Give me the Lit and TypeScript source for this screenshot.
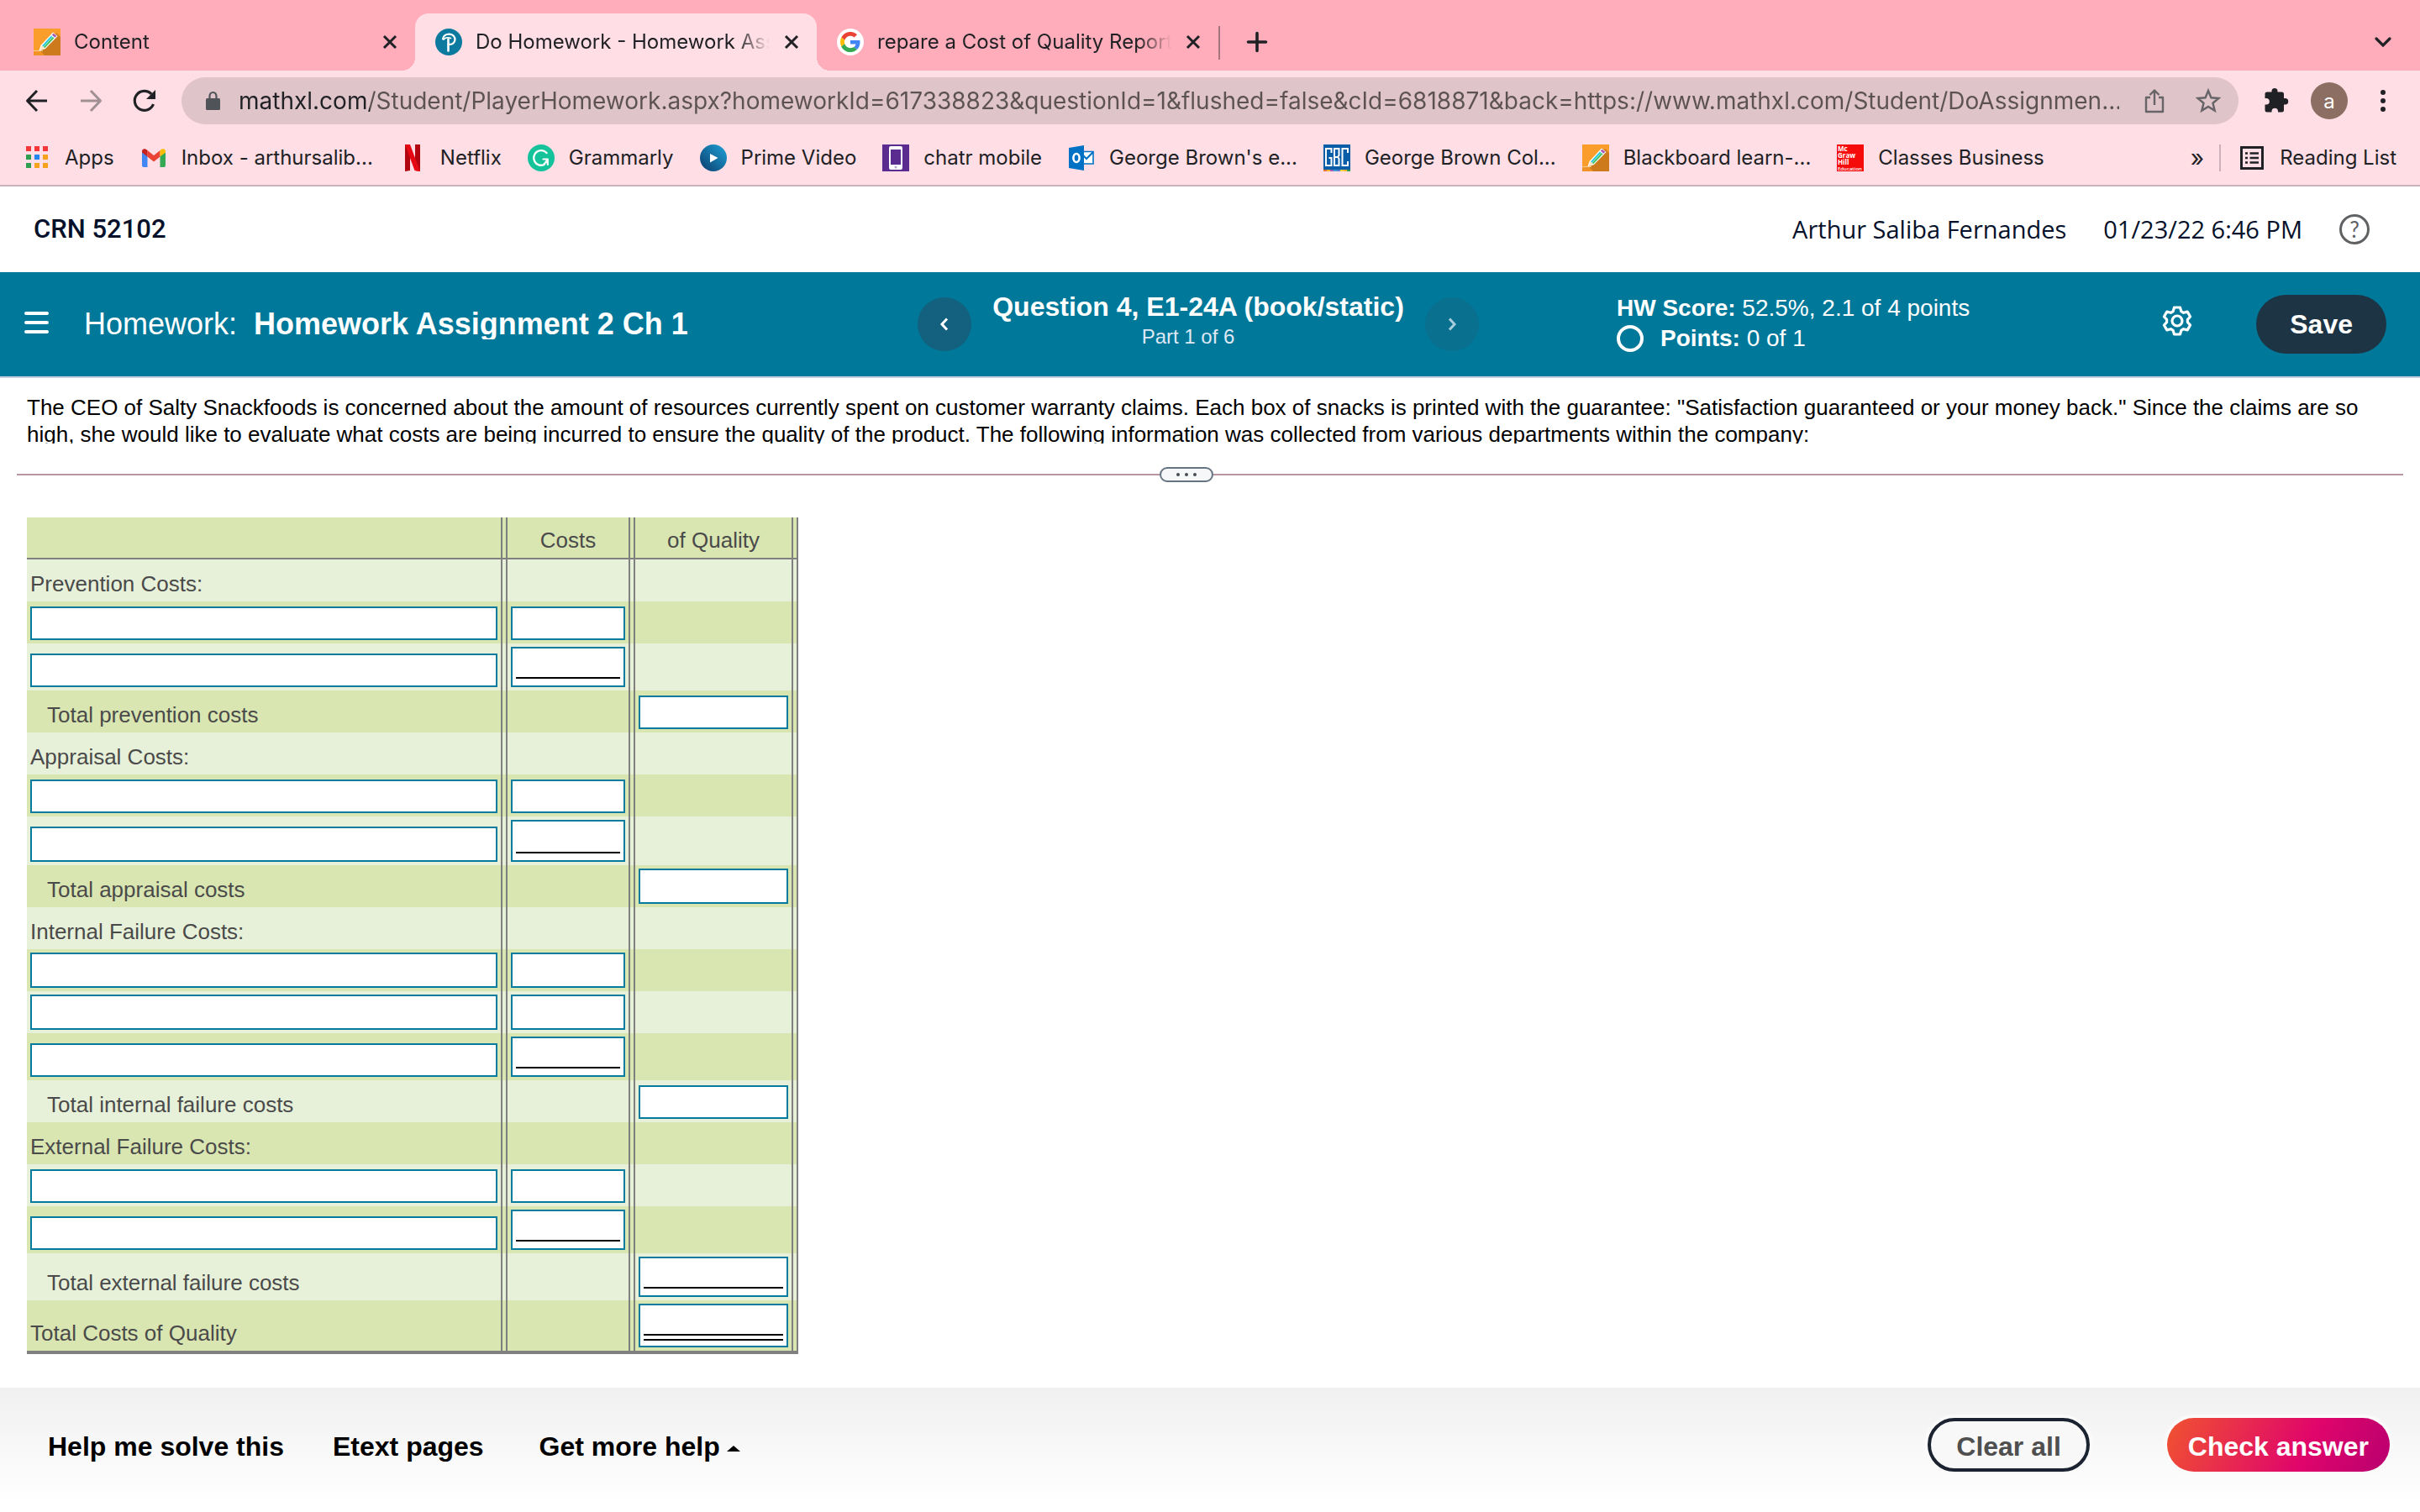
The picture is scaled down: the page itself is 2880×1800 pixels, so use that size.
import { LitElement, html, css, svg, nothing } from "lit";
import { customElement } from "lit/decorators.js";
import { classMap } from "lit/directives/class-map.js";

/* ---------- icons ---------- */

const pencilIcon = html`<svg class="fav" viewBox="0 0 32 32" aria-hidden="true">
  <rect width="32" height="32" fill="#fb9d2b" />
  <path d="M27 5 L32 10 V32 H13 L7 26 Z" fill="#cc7a1c" />
  <path d="M0 26.500 H7 L13 32 H0 Z" fill="#f09225" />
  <path d="M0 26.500 H11" stroke="#f9c787" stroke-width="1.200" />
  <path d="M6.500 26.500 L8.500 20 L23 4.500 L28.500 9 L14 24 Z" fill="#fff" />
  <path d="M10 20.500 L21 8.500 L22.500 9.700 L11.500 21.700 Z" fill="#22c7de" />
  <path d="M11.800 22 L22.800 10 L24.500 11.300 L13.300 23.300 Z" fill="#3fc35f" />
  <path d="M9 21 L10.500 20.500 L12.500 23.500 L8 25.500 Z" fill="#ffe3bd" />
  <path d="M21.800 7.600 L23.600 5.700 L27.300 8.800 L25.400 10.700 Z" fill="#a557b8" />
</svg>`;

const pearsonIcon = html`<svg class="fav" viewBox="0 0 32 32" aria-hidden="true">
  <circle cx="16" cy="16" r="16" fill="#0b7a9e" />
  <path d="M9 12.500 C9.500 8.500 13 6.500 17 6.700 C21 7 23.700 9.800 23.400 13.600 C23.100 17 20 19.200 17 18.800" fill="none" stroke="#fff" stroke-width="2.200" stroke-linecap="round" />
  <path d="M15.500 12.500 V26.500" stroke="#fff" stroke-width="2.600" stroke-linecap="round" />
  <path d="M10 12.800 C12 10.500 16 10.500 18.500 11.500" fill="none" stroke="#fff" stroke-width="1.800" stroke-linecap="round" />
</svg>`;

const googleIcon = html`<svg class="fav" viewBox="0 0 32 32" aria-hidden="true">
  <circle cx="16" cy="16" r="16" fill="#fff" />
  <g transform="translate(4 4) scale(.5)">
    <path fill="#EA4335" d="M24 9.500c3.540 0 6.710 1.220 9.210 3.600l6.850-6.850C35.900 2.380 30.470 0 24 0 14.620 0 6.510 5.380 2.560 13.220l7.980 6.190C12.430 13.720 17.740 9.500 24 9.500z" />
    <path fill="#4285F4" d="M46.980 24.550c0-1.570-.15-3.090-.38-4.550H24v9.020h12.940c-.58 2.960-2.260 5.480-4.780 7.180l7.730 6c4.510-4.180 7.090-10.360 7.090-17.650z" />
    <path fill="#FBBC05" d="M10.530 28.590c-.48-1.450-.76-2.990-.76-4.590s.27-3.140.76-4.590l-7.980-6.190C.92 16.460 0 20.120 0 24c0 3.880.92 7.540 2.560 10.780l7.970-6.190z" />
    <path fill="#34A853" d="M24 48c6.480 0 11.930-2.130 15.890-5.810l-7.730-6c-2.150 1.450-4.920 2.300-8.160 2.300-6.260 0-11.570-4.220-13.470-9.910l-7.980 6.190C6.510 42.620 14.620 48 24 48z" />
  </g>
</svg>`;

const appsIcon = html`<svg class="fav" viewBox="0 0 32 32" aria-hidden="true">
  ${["#f4373a", "#f4373a", "#f4373a", "#2e9e4f", "#2485ee", "#f5a31d", "#2e9e4f", "#f5a31d", "#f5a31d"].map(
    (c, i) => svg`<rect x=${3 + (i % 3) * 10} y=${2 + Math.floor(i / 3) * 10} width="6" height="6" fill=${c} />`,
  )}
</svg>`;

const gmailIcon = html`<svg class="fav" viewBox="0 0 32 32" aria-hidden="true">
  <path d="M2 9 L8.500 13.500 V27 H4 Q2 27 2 25 Z" fill="#4285f4" />
  <path d="M30 9 L23.500 13.500 V27 H28 Q30 27 30 25 Z" fill="#34a853" />
  <path d="M8.500 7 L16 13 L23.500 7 V14.500 L16 20.500 L8.500 14.500 Z" fill="#ea4335" />
  <path d="M2 8.500 C2 5 5.500 4.200 8.500 7 V14.500 L2 9.500 Z" fill="#c5221f" />
  <path d="M30 8.500 C30 5 26.500 4.200 23.500 7 V14.500 L30 9.500 Z" fill="#fbbc04" />
</svg>`;

const netflixIcon = html`<svg class="fav" viewBox="0 0 32 32" aria-hidden="true">
  <path d="M7 0 H13 V31 L7 32 Z" fill="#b1060f" />
  <path d="M19 0 H25 V32 L19 31 Z" fill="#b1060f" />
  <path d="M7 0 H13 L25 32 L18.500 31 Z" fill="#e50914" />
</svg>`;

const grammarlyIcon = html`<svg class="fav" viewBox="0 0 32 32" aria-hidden="true">
  <circle cx="16" cy="16" r="16" fill="#15c39a" />
  <path d="M22.500 10 A8.800 8.800 0 1 0 19.500 24" fill="none" stroke="#fff" stroke-width="2.400" stroke-linecap="round" />
  <path d="M18.500 17.500 H23.800 V24 M23.800 18 L19.500 23.500" fill="none" stroke="#fff" stroke-width="2.200" stroke-linecap="round" stroke-linejoin="round" />
</svg>`;

const primeIcon = html`<svg class="fav" viewBox="0 0 32 32" aria-hidden="true">
  <defs>
    <linearGradient id="prime" x1="1" y1="0" x2="0" y2="1">
      <stop offset="0" stop-color="#1ea3d8" />
      <stop offset="1" stop-color="#0b3b6b" />
    </linearGradient>
  </defs>
  <circle cx="16" cy="16" r="16" fill="url(#prime)" />
  <path d="M12 11 L21.500 16 L12 21.500 Z" fill="#fff" />
</svg>`;

const chatrIcon = html`<svg class="fav" viewBox="0 0 32 32" aria-hidden="true">
  <rect width="32" height="32" fill="#5b2c8f" />
  <rect x="8" y="2" width="16" height="28" rx="2" fill="#fff" />
  <rect x="10" y="6" width="12" height="18" fill="#5b2c8f" />
  <circle cx="16" cy="27" r="1.500" fill="#b9a5cf" />
</svg>`;

const outlookIcon = html`<svg class="fav" viewBox="0 0 32 32" aria-hidden="true">
  <path d="M17 8.500 H30 V23 H17 Z" fill="#fff" stroke="#0072c6" stroke-width="1.600" />
  <path d="M17 12 L22 17 L30 9" fill="none" stroke="#0072c6" stroke-width="2.200" />
  <path d="M1 4 L19 1 V31 L1 28 Z" fill="#0072c6" />
  <ellipse cx="10" cy="16" rx="3.600" ry="5" fill="none" stroke="#fff" stroke-width="2.600" />
</svg>`;

const gbcIcon = html`<svg class="fav" viewBox="0 0 32 32" aria-hidden="true">
  <rect width="32" height="30" fill="#0a5ea8" />
  <g fill="none" stroke="#fff" stroke-width="2">
    <path d="M9.500 10 V5 H3 V25 H9.500 V16 H6.500" />
    <path d="M13 5 H18.500 V13 L17 15 L18.500 17 V25 H13 Z M13 15 H17" />
    <path d="M29 10 V5 H22.500 V25 H29 V20" />
  </g>
  ${["#e8743b", "#f2b632", "#9c5fb5", "#3aa0dd", "#5d7fd0", "#f2d13a", "#f2b632", "#2e9e4f"].map(
    (c, i) => svg`<rect x=${i * 4} y="30" width="4" height="2" fill=${c} />`,
  )}
</svg>`;

const mcgrawIcon = html`<svg class="fav" viewBox="0 0 32 32" aria-hidden="true">
  <rect width="32" height="32" fill="#f60b0b" />
  <g fill="#fff" font-family="Open Sans, sans-serif" font-weight="700" font-size="8">
    <text x="1" y="8">Mc</text>
    <text x="1" y="16">Graw</text>
    <text x="1" y="24">Hill</text>
    <text x="1" y="31" font-size="6" font-weight="600">Education</text>
  </g>
</svg>`;

const closeIcon = html`<svg class="close-glyph" viewBox="0 0 20 20" aria-hidden="true">
  <path d="M3 3 L17 17 M17 3 L3 17" stroke="#202124" stroke-width="3" />
</svg>`;

/* ---------- browser frame ---------- */

const tabs = [
  { title: "Content", icon: pencilIcon, active: false },
  { title: "Do Homework - Homework Assignment", icon: pearsonIcon, active: true },
  { title: "repare a Cost of Quality Report for", icon: googleIcon, active: false },
];

const bookmarks = [
  { label: "Apps", icon: appsIcon },
  { label: "Inbox - arthursalib...", icon: gmailIcon },
  { label: "Netflix", icon: netflixIcon },
  { label: "Grammarly", icon: grammarlyIcon },
  { label: "Prime Video", icon: primeIcon },
  { label: "chatr mobile", icon: chatrIcon },
  { label: "George Brown's e...", icon: outlookIcon },
  { label: "George Brown Col...", icon: gbcIcon },
  { label: "Blackboard learn-...", icon: pencilIcon },
  { label: "Classes Business", icon: mcgrawIcon },
];

const address =
  "mathxl.com/Student/PlayerHomework.aspx?homeworkId=617338823&questionId=1&flushed=false&cId=6818871&back=https://www.mathxl.com/Student/DoAssignmen...";

@customElement("browser-frame")
export class BrowserFrame extends LitElement {
  static styles = css`
    :host {
      display: block;
      font-family: Inter, "Liberation Sans", sans-serif;
      font-size: 24px;
      color: #202124;
      background: #ffdee5;
      border-bottom: 2px solid #cbb1ba;
    }
    button {
      font: inherit;
      color: inherit;
      background: none;
      border: 0;
      padding: 0;
      display: grid;
      place-items: center;
    }
    .strip {
      display: flex;
      height: 84px;
      padding-left: 16px;
      padding-right: 22px;
      background: #ffadbb;
      align-items: flex-end;
    }
    .tab {
      position: relative;
      box-sizing: border-box;
      width: 478px;
      height: 68px;
      padding: 0 20px 0 24px;
      display: flex;
      align-items: center;
      gap: 16px;
    }
    .tab.active {
      background: #ffdee5;
      border-radius: 16px 16px 0 0;
    }
    .tab.active::before,
    .tab.active::after {
      content: "";
      position: absolute;
      bottom: 0;
      width: 16px;
      height: 16px;
    }
    .tab.active::before {
      right: 100%;
      background: radial-gradient(circle at 0 0, transparent 16px, #ffdee5 16px);
    }
    .tab.active::after {
      left: 100%;
      background: radial-gradient(circle at 100% 0, transparent 16px, #ffdee5 16px);
    }
    .title {
      flex: 1;
      min-width: 0;
      overflow: hidden;
      white-space: nowrap;
      line-height: 32px;
      mask-image: linear-gradient(90deg, #000 calc(100% - 40px), transparent);
    }
    .close {
      width: 20px;
      height: 20px;
    }
    .close-glyph {
      width: 20px;
      height: 20px;
    }
    .rule {
      width: 2px;
      height: 40px;
      margin-bottom: 13px;
      background: #a8757f;
    }
    .strip .tool {
      height: 68px;
    }
    .strip .tool.new {
      margin-left: 22px;
    }
    .push {
      margin-left: auto;
    }
    .fav {
      width: 32px;
      height: 32px;
      flex: none;
      display: block;
    }
    .bar {
      display: flex;
      align-items: center;
      gap: 20px;
      padding: 8px 22px;
    }
    .tool {
      width: 44px;
      height: 44px;
      flex: none;
    }
    .tool svg {
      width: 32px;
      height: 32px;
    }
    .omnibox {
      flex: 1;
      min-width: 0;
      height: 56px;
      margin: 0 2px;
      box-sizing: border-box;
      padding: 0 14px 0 28px;
      border-radius: 28px;
      background: #dfc4ca;
      display: flex;
      align-items: center;
      gap: 20px;
    }
    .lock {
      width: 20px;
      height: 24px;
      flex: none;
    }
    .address {
      flex: 1;
      min-width: 0;
      border: 0;
      padding: 0;
      font: 28px/40px Inter, "Liberation Sans", sans-serif;
      color: #5c5254;
      background: linear-gradient(90deg, #202124 156px, #5c5254 156px);
      background-clip: text;
      -webkit-background-clip: text;
      -webkit-text-fill-color: transparent;
      outline: 0;
    }
    .avatar {
      border-radius: 50%;
      background: #8d6e63;
      color: #fff;
      font-size: 24px;
    }
    .marks {
      display: flex;
      align-items: center;
      gap: 31px;
      height: 64px;
      padding: 0 28px;
    }
    .mark {
      display: flex;
      align-items: center;
      gap: 17px;
      color: inherit;
      text-decoration: none;
      white-space: nowrap;
      line-height: 32px;
    }
    .more {
      margin-left: auto;
      font-size: 28px;
    }
    .tail {
      border-left: 2px solid #cbb1ba;
      padding-left: 21px;
      margin-left: -13px;
    }
  `;

  render() {
    return html`
      <div class="strip">
        ${tabs.map(
          (t) => html`<div class=${classMap({ tab: true, active: t.active })}>
            ${t.icon}<span class="title">${t.title}</span>
            <button class="close" aria-label="Close tab">${closeIcon}</button>
          </div>`,
        )}
        <span class="rule"></span>
        <button class="tool new" aria-label="New tab">
          <svg viewBox="0 0 32 32"><path d="M16 5.500 V26.500 M5.500 16 H26.500" stroke="#202124" stroke-width="3.600" stroke-linecap="round" /></svg>
        </button>
        <button class="tool push" aria-label="Search tabs">
          <svg viewBox="0 0 32 32"><path d="M8 12 L16 20 L24 12" fill="none" stroke="#202124" stroke-width="3.200" stroke-linecap="round" /></svg>
        </button>
      </div>

      <div class="bar">
        <button class="tool" aria-label="Back">
          <svg viewBox="0 0 32 32"><path d="M28 16 H5 M16 4 L4.500 16 L16 28" fill="none" stroke="#202124" stroke-width="3" stroke-linejoin="round" /></svg>
        </button>
        <button class="tool" aria-label="Forward">
          <svg viewBox="0 0 32 32"><path d="M4 16 H27 M16 4 L27.500 16 L16 28" fill="none" stroke="#a08f94" stroke-width="3" stroke-linejoin="round" /></svg>
        </button>
        <button class="tool" aria-label="Reload">
          <svg viewBox="0 0 32 32">
            <path d="M26.500 20 A11.500 11.500 0 1 1 24.200 8" fill="none" stroke="#202124" stroke-width="3.200" />
            <path d="M29 3 V14 H18 Z" fill="#202124" />
          </svg>
        </button>
        <div class="omnibox">
          <svg class="lock" viewBox="0 0 20 24">
            <path d="M5.500 10 V6.500 A4 4.500 0 0 1 13.500 6.500 V10" fill="none" stroke="#505357" stroke-width="2.200" />
            <rect x="1" y="9" width="17" height="14" rx="1.500" fill="#505357" />
          </svg>
          <input class="address" type="text" aria-label="Address" .value=${address} />
          <button class="tool" aria-label="Share">
            <svg viewBox="0 0 32 32"><path d="M11 12 H6 V29 H26 V12 H21 M16 21 V4 M10.500 9 L16 3.500 L21.500 9" fill="none" stroke="#666466" stroke-width="2.400" stroke-linejoin="round" /></svg>
          </button>
          <button class="tool" aria-label="Bookmark this page">
            <svg viewBox="0 0 32 32"><path d="M16 4 L19.400 12.300 L28.400 13 L21.500 18.800 L23.700 27.600 L16 22.900 L8.300 27.600 L10.500 18.800 L3.600 13 L12.600 12.300 Z" fill="none" stroke="#666466" stroke-width="2.400" /></svg>
          </button>
        </div>
        <button class="tool" aria-label="Extensions">
          <svg viewBox="0 0 32 32"><path d="M27.500 13 H26 V8 Q26 5.500 23.500 5.500 H18.500 V4.500 A3.500 3.500 0 0 0 11.500 4.500 V5.500 H6 Q3.500 5.500 3.500 8 V13 H5 A3.800 3.800 0 0 1 5 20.600 H3.500 V27 Q3.500 29.500 6 29.500 H11.500 V28 A3.800 3.800 0 0 1 19 28 V29.500 H23.500 Q26 29.500 26 27 V20.500 H27.500 A3.700 3.700 0 0 0 27.500 13 Z" fill="#202124" /></svg>
        </button>
        <button class="tool avatar" aria-label="Profile">a</button>
        <button class="tool" aria-label="Browser menu">
          <svg viewBox="0 0 32 32" fill="#202124"><circle cx="16" cy="6" r="3" /><circle cx="16" cy="16" r="3" /><circle cx="16" cy="26" r="3" /></svg>
        </button>
      </div>

      <nav class="marks" aria-label="Bookmarks">
        ${bookmarks.map((b) => html`<a class="mark" href="#">${b.icon}<span>${b.label}</span></a>`)}
        <button class="more" aria-label="More bookmarks">»</button>
        <a class="mark tail" href="#">
          <svg class="fav" viewBox="0 0 32 32">
            <rect x="3.500" y="3.500" width="25" height="25" fill="none" stroke="#202124" stroke-width="3" />
            <path d="M8 10.500 H11 M8 16 H11 M8 21.500 H11 M13.500 10.500 H24 M13.500 16 H24 M13.500 21.500 H24" stroke="#202124" stroke-width="2.600" />
          </svg>
          <span>Reading List</span>
        </a>
      </nav>
    `;
  }
}

/* ---------- cost table ---------- */

type Box = "plain" | "sum" | "total";
interface Row {
  label?: string;
  indent?: boolean;
  cost?: Box;
  quality?: Box;
  size?: "tall" | "taller" | "last";
  roomy?: boolean;
}

const rows: Row[] = [
  { label: "Prevention Costs:" },
  { cost: "plain" },
  { cost: "sum", size: "tall" },
  { label: "Total prevention costs", indent: true, quality: "plain" },
  { label: "Appraisal Costs:" },
  { cost: "plain" },
  { cost: "sum", size: "taller", roomy: true },
  { label: "Total appraisal costs", indent: true, quality: "plain", roomy: true },
  { label: "Internal Failure Costs:" },
  { cost: "plain", roomy: true },
  { cost: "plain", roomy: true },
  { cost: "sum", size: "tall" },
  { label: "Total internal failure costs", indent: true, quality: "plain" },
  { label: "External Failure Costs:" },
  { cost: "plain" },
  { cost: "sum", size: "tall" },
  { label: "Total external failure costs", indent: true, quality: "sum", size: "tall" },
  { label: "Total Costs of Quality", quality: "total", size: "last" },
];

@customElement("cost-table")
export class CostTable extends LitElement {
  static styles = css`
    :host {
      display: block;
      font: 26px/30px "Liberation Sans", Arial, sans-serif;
      color: #4a4a4a;
    }
    table {
      border-collapse: separate;
      border-spacing: 0;
      table-layout: fixed;
      width: 918px;
      border-bottom: 4px solid #808080;
    }
    .c-label {
      width: 572px;
    }
    .c-cost {
      width: 152px;
    }
    .c-quality {
      width: 194px;
    }
    th,
    td {
      box-sizing: border-box;
      height: 50px;
      padding: 0 12px 4px 4px;
      vertical-align: bottom;
      text-align: left;
      font-weight: 400;
      background: linear-gradient(90deg, #808080 2px, transparent 2px 6px, #808080 6px) right / 8px 100% no-repeat;
    }
    th {
      text-align: center;
      border-bottom: 2px solid #808080;
      padding-bottom: 6px;
    }
    tr {
      background: #e7f1d9;
    }
    tbody tr:nth-child(even),
    thead tr {
      background: #d9e6b1;
    }
    .tall td {
      height: 56px;
    }
    .taller td {
      height: 58px;
    }
    .last td {
      height: 60px;
    }
    .text {
      display: block;
      padding-bottom: 2px;
    }
    .indent {
      padding-left: 20px;
    }
    .box {
      display: block;
      box-sizing: border-box;
      border: 2px solid #047a9c;
      background: #fff;
    }
    input {
      display: block;
      box-sizing: border-box;
      width: 100%;
      height: 36px;
      border: 0;
      padding: 0 4px;
      font: inherit;
      color: inherit;
      background: none;
      outline: 0;
    }
    .roomy input {
      height: 38px;
    }
    .sum,
    .total {
      padding: 0 4px 8px;
    }
    .sum input,
    .total input {
      border-bottom: 2px solid #000;
    }
    .total::after {
      content: "";
      display: block;
      height: 4px;
      border-bottom: 2px solid #000;
    }
    .total {
      padding-bottom: 6px;
    }
  `;

  private box(kind: Box | undefined, name: string) {
    return kind
      ? html`<label class=${classMap({ box: true, [kind]: true })}><input type="text" aria-label=${name} /></label>`
      : nothing;
  }

  render() {
    return html`<table>
      <colgroup>
        <col class="c-label" />
        <col class="c-cost" />
        <col class="c-quality" />
      </colgroup>
      <thead>
        <tr>
          <th scope="col"></th>
          <th scope="col">Costs</th>
          <th scope="col">of Quality</th>
        </tr>
      </thead>
      <tbody>
        ${rows.map(
          (r, i) => html`<tr
            class=${classMap({
              tall: r.size === "tall",
              taller: r.size === "taller",
              last: r.size === "last",
              roomy: !!r.roomy,
            })}
          >
            <td>
              ${r.label
                ? html`<span class=${classMap({ text: true, indent: !!r.indent })}>${r.label}</span>`
                : this.box("plain", `Cost item, row ${i + 1}`)}
            </td>
            <td>${this.box(r.cost, `Costs, row ${i + 1}`)}</td>
            <td>${this.box(r.quality, `Total of quality, row ${i + 1}`)}</td>
          </tr>`,
        )}
      </tbody>
    </table>`;
  }
}

/* ---------- page ---------- */

@customElement("app-root")
export class AppRoot extends LitElement {
  static styles = css`
    :host {
      display: flex;
      flex-direction: column;
      min-height: 100vh;
      background: #fff;
      font-family: "Liberation Sans", Arial, sans-serif;
      color: #000;
    }
    button {
      font: inherit;
      color: inherit;
      background: none;
      border: 0;
      padding: 0;
    }
    .who {
      display: flex;
      align-items: center;
      gap: 44px;
      height: 102px;
      padding: 0 60px 0 40px;
      font: 29px/40px "Open Sans", sans-serif;
      color: #05112a;
    }
    .course {
      margin-right: auto;
      font-family: Roboto, sans-serif;
      font-size: 31px;
      font-weight: 500;
    }
    .help {
      box-sizing: border-box;
      width: 36px;
      height: 36px;
      border: 3px solid #5f6163;
      border-radius: 50%;
      font: 26px/30px Lato, sans-serif;
      color: #5f6163;
    }
    .banner {
      display: grid;
      grid-template-columns: 1092fr 668fr 1120fr;
      align-items: center;
      height: 124px;
      background: #00789a;
      border-bottom: 2px solid #c8d0e0;
      color: #fff;
    }
    .task {
      display: flex;
      align-items: center;
      padding-left: 27px;
    }
    .menu svg {
      display: block;
      width: 32px;
      height: 32px;
    }
    .menu {
      padding-bottom: 4px;
    }
    .name {
      margin: 0 0 0 41px;
      font-size: 36px;
      line-height: 36px;
      font-weight: 400;
      overflow: hidden;
      white-space: nowrap;
    }
    .name strong {
      margin-left: 10px;
    }
    .question {
      display: flex;
      align-items: center;
      justify-content: space-between;
    }
    .heading {
      text-align: center;
      line-height: 36px;
      padding-bottom: 6px;
    }
    .heading h2 {
      margin: 0;
      font-size: 32px;
      line-height: 36px;
    }
    .part {
      margin: 0;
      padding-right: 24px;
      font-size: 24px;
      color: #dfe9f5;
    }
    .step {
      width: 64px;
      height: 64px;
      border-radius: 50%;
      background: #13607f;
      display: grid;
      place-items: center;
    }
    .step:disabled {
      background: #0a7090;
      color: #a9cedb;
    }
    .step svg {
      width: 20px;
      height: 20px;
    }
    .status {
      display: flex;
      align-items: center;
      padding: 0 40px 0 164px;
    }
    .score {
      margin-right: auto;
      padding-bottom: 2px;
      font-size: 28px;
      line-height: 36px;
    }
    .points {
      display: flex;
      align-items: center;
      gap: 20px;
    }
    .ring {
      box-sizing: border-box;
      width: 32px;
      height: 32px;
      border: 4px solid #fff;
      border-radius: 50%;
    }
    .gear {
      margin-right: 76px;
      padding-bottom: 8px;
    }
    .gear svg {
      display: block;
      width: 36px;
      height: 36px;
    }
    .save {
      height: 70px;
      padding: 0 40px;
      border-radius: 35px;
      background: #1c3444;
      font-size: 32px;
      font-weight: 700;
    }
    main {
      flex: 1;
      padding: 19px 20px 0;
    }
    .prompt {
      margin: 0 12px;
      height: 59px;
      overflow: hidden;
      font-size: 26px;
      line-height: 32px;
    }
    .split {
      display: flex;
      align-items: center;
      margin: 28px 0 42px;
    }
    .split::before,
    .split::after {
      content: "";
      height: 2px;
      background: #b896a0;
    }
    .split::before {
      flex: 24;
    }
    .split::after {
      flex: 25;
    }
    .grip {
      box-sizing: border-box;
      width: 64px;
      height: 18px;
      border: 2px solid #667482;
      border-radius: 9px;
      background: #f5f7f8;
      display: flex;
      align-items: center;
      justify-content: center;
      gap: 6px;
    }
    .grip i {
      width: 4px;
      height: 4px;
      border-radius: 50%;
      background: #4a4f55;
    }
    cost-table {
      margin-left: 12px;
    }
    footer {
      display: flex;
      align-items: center;
      gap: 58px;
      height: 148px;
      box-sizing: border-box;
      padding: 0 36px 12px 57px;
      background: linear-gradient(#f0f0f0, #fff 90%);
      font-size: 32px;
      line-height: 40px;
      font-weight: 700;
    }
    footer button {
      padding-top: 4px;
    }
    .more {
      display: flex;
      align-items: center;
      gap: 8px;
      padding: 4px 8px 0;
    }
    .more::after {
      content: "";
      border: 8px solid transparent;
      border-top: 0;
      border-bottom: 7px solid #000;
      margin-top: 4px;
    }
    footer .pill {
      box-sizing: border-box;
      height: 64px;
      padding: 4px 25px 0;
      border-radius: 32px;
      box-shadow: 0 0 0 4px #fafafa;
    }
    footer .clear {
      margin: 0 34px 0 auto;
      border: 4px solid #1b2230;
      padding: 4px 30px 0;
      background: #f8f8f8;
      color: #4f4f4f;
    }
    .check {
      color: #fff;
      background: linear-gradient(115deg, #f05330, #e0056b 62%, #b8006f);
    }
  `;

  render() {
    return html`
      <browser-frame></browser-frame>

      <header class="who">
        <span class="course">CRN 52102</span>
        <span>Arthur Saliba Fernandes</span>
        <span>01/23/22 6:46 PM</span>
        <button class="help" aria-label="Help">?</button>
      </header>

      <section class="banner">
        <div class="task">
          <button class="menu" aria-label="Menu">
            <svg viewBox="0 0 32 32"><path d="M4 5 H29 M4 16 H29 M4 27 H29" stroke="#fff" stroke-width="4" stroke-linecap="round" /></svg>
          </button>
          <h1 class="name">Homework: <strong>Homework Assignment 2 Ch 1</strong></h1>
        </div>
        <div class="question">
          <button class="step" aria-label="Previous question">
            <svg viewBox="0 0 20 20"><path d="M13 3.500 L7 10 L13 16.500" fill="none" stroke="currentColor" stroke-width="3" /></svg>
          </button>
          <div class="heading">
            <h2>Question 4, E1-24A (book/static)</h2>
            <p class="part">Part 1 of 6</p>
          </div>
          <button class="step" aria-label="Next question" disabled>
            <svg viewBox="0 0 20 20"><path d="M7 3.500 L13 10 L7 16.500" fill="none" stroke="currentColor" stroke-width="3" /></svg>
          </button>
        </div>
        <div class="status">
          <div class="score">
            <div><b>HW Score:</b> 52.5%, 2.1 of 4 points</div>
            <div class="points"><span class="ring"></span><span><b>Points:</b> 0 of 1</span></div>
          </div>
          <button class="gear" aria-label="Settings">
            <svg viewBox="0 0 36 36" fill="none" stroke="#fff" stroke-width="3.200" stroke-linejoin="round">
              <path d="M14.500 2 H21.500 L22.800 6.600 L25.600 8.300 L30.200 7.100 L33.600 13 L30.400 16.300 V19.700 L33.600 23 L30.200 28.900 L25.600 27.700 L22.800 29.400 L21.500 34 H14.500 L13.200 29.400 L10.400 27.700 L5.800 28.900 L2.400 23 L5.600 19.700 V16.300 L2.400 13 L5.800 7.100 L10.400 8.300 L13.200 6.600 Z" />
              <circle cx="18" cy="18" r="6" />
            </svg>
          </button>
          <button class="save">Save</button>
        </div>
      </section>

      <main>
        <p class="prompt">
          The CEO of Salty Snackfoods is concerned about the amount of resources currently spent on customer warranty
          claims. Each box of snacks is printed with the guarantee: "Satisfaction guaranteed or your money back." Since
          the claims are so high, she would like to evaluate what costs are being incurred to ensure the quality of the
          product. The following information was collected from various departments within the company:
        </p>
        <div class="split">
          <button class="grip" aria-label="Resize panes"><i></i><i></i><i></i></button>
        </div>
        <cost-table></cost-table>
      </main>

      <footer>
        <button>Help me solve this</button>
        <button>Etext pages</button>
        <button class="more">Get more help</button>
        <button class="pill clear">Clear all</button>
        <button class="pill check">Check answer</button>
      </footer>
    `;
  }
}
